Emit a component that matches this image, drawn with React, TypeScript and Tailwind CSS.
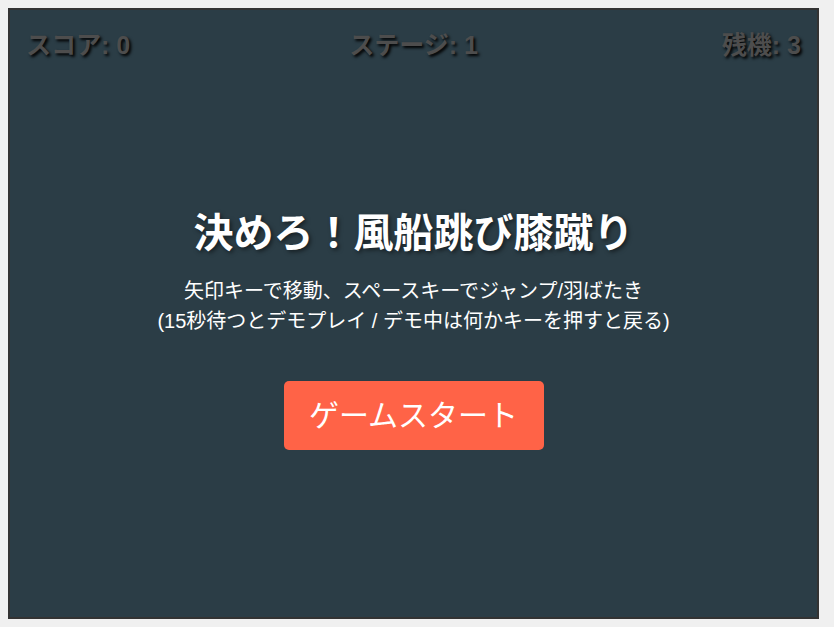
import React from 'react';

const FONT = '"Liberation Sans", "Noto Sans CJK JP", sans-serif';

function HudItem({ label, value, className }: { label: string; value: number; className?: string }) {
  return (
    <span
      className={`text-[25px] font-bold leading-[30px] text-[#4d4d4d] [text-shadow:2px_2px_3px_#000] ${className ?? ''}`}
    >
      {label}: {value}
    </span>
  );
}

export default function App() {
  return (
    <div className="min-h-screen bg-[#f0f0f0] p-2" style={{ fontFamily: FONT }}>
      <div className="flex h-[611px] w-[811px] flex-col border-2 border-[#333] bg-[#2b3d46]">
        {/* HUD */}
        <div className="grid grid-cols-3 items-center px-[16px] pt-[20px]">
          <HudItem label="スコア" value={0} className="justify-self-start" />
          <HudItem label="ステージ" value={1} className="justify-self-center" />
          <HudItem label="残機" value={3} className="justify-self-end" />
        </div>

        {/* タイトル画面 */}
        <div className="mt-[148px] flex flex-col items-center text-center text-white">
          <h1 className="text-[40px] font-bold leading-[50px] [text-shadow:2px_2px_4px_rgba(0,0,0,0.5)]">
            決めろ！風船跳び膝蹴り
          </h1>
          <p className="mt-[18px] text-[20px] leading-[30px]">
            矢印キーで移動、スペースキーでジャンプ/羽ばたき
            <br />
            (15秒待つとデモプレイ / デモ中は何かキーを押すと戻る)
          </p>
          <button className="mt-[45px] h-[69px] w-[260px] rounded-[5px] bg-[#ff6347] text-[30px] leading-[69px] text-white">
            ゲームスタート
          </button>
        </div>
      </div>
    </div>
  );
}
